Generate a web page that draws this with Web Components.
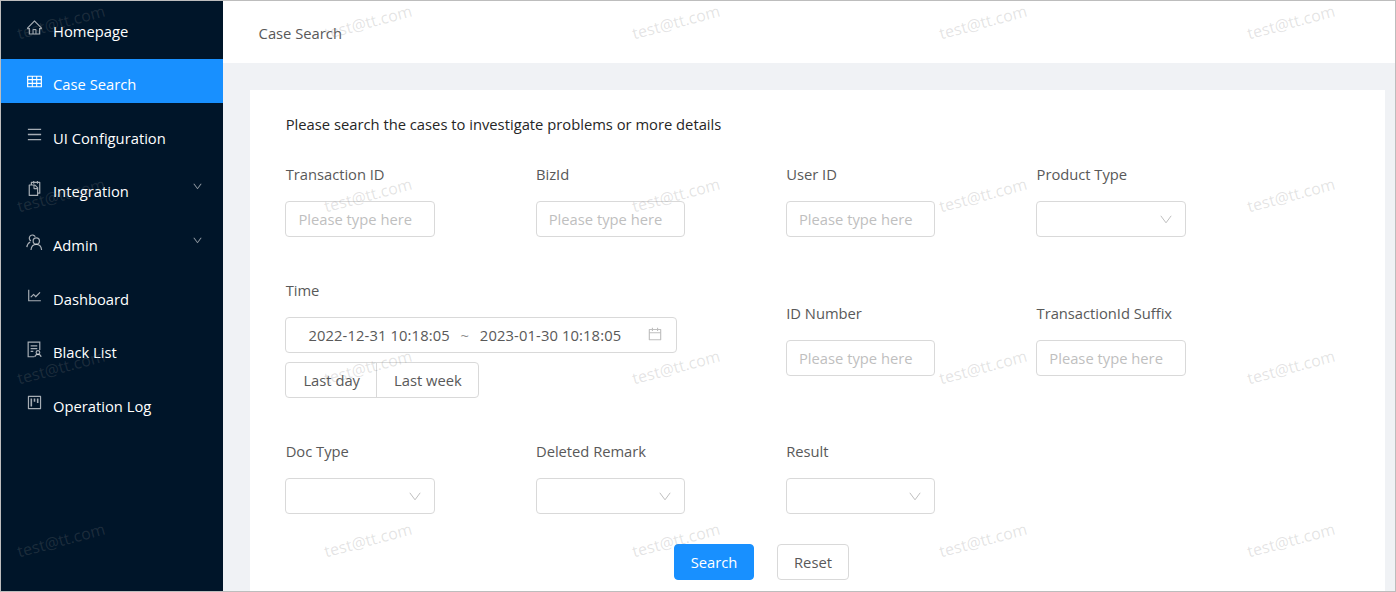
<!DOCTYPE html>
<html><head><meta charset="utf-8">
<style>
html,body{margin:0;padding:0;height:592px;overflow:hidden;background:#fff}
body{font-family:"Open Sans","Noto Sans",sans-serif}
</style></head><body>
<app-shell>
  <side-nav slot="nav">
    <nav-item icon="home">Homepage</nav-item>
    <nav-item icon="table" active>Case Search</nav-item>
    <nav-item icon="bars">UI Configuration</nav-item>
    <nav-item icon="snippets" arrow>Integration</nav-item>
    <nav-item icon="team" arrow>Admin</nav-item>
    <nav-item icon="chart">Dashboard</nav-item>
    <nav-item icon="audit">Black List</nav-item>
    <nav-item icon="project">Operation Log</nav-item>
  </side-nav>
  <top-bar slot="top">Case Search</top-bar>
  <search-card>
    <p-intro slot="intro">Please search the cases to investigate problems or more details</p-intro>
    <form-field label="Transaction ID"><text-box></text-box></form-field>
    <form-field label="BizId"><text-box></text-box></form-field>
    <form-field label="User ID"><text-box></text-box></form-field>
    <form-field label="Product Type"><select-box></select-box></form-field>
    <form-field label="Time" style="grid-column:span 2">
      <date-range></date-range>
      <button-pair></button-pair>
    </form-field>
    <form-field label="ID Number"><text-box></text-box></form-field>
    <form-field label="TransactionId Suffix"><text-box></text-box></form-field>
    <form-field label="Doc Type"><select-box></select-box></form-field>
    <form-field label="Deleted Remark"><select-box></select-box></form-field>
    <form-field label="Result"><select-box></select-box></form-field>
    <ui-button slot="actions" primary>Search</ui-button>
    <ui-button slot="actions">Reset</ui-button>
  </search-card>
  <water-mark slot="overlay"></water-mark>
</app-shell>
<script>
const ICONS={
home:'<path fill="currentColor" d="M946.5 505L560.1 118.8l-25.9-25.9a31.5 31.5 0 0 0-44.4 0L77.5 505a63.9 63.9 0 0 0-18.8 46c.4 35.2 29.7 63.3 64.9 63.3h42.5V940h691.8V614.3h43.4c17.1 0 33.2-6.7 45.3-18.8a63.6 63.6 0 0 0 18.7-45.3c0-17-6.7-33.1-18.8-45.2zM568 868H456V664h112v204zm217.9-325.7V868H632V640c0-22.1-17.9-40-40-40H432c-22.1 0-40 17.9-40 40v228H238.1V542.3h-96l370-369.7 23.1 23.1L882 542.3h-96.1z"/>',
table:'<path fill="currentColor" d="M928 160H96c-17.7 0-32 14.3-32 32v640c0 17.7 14.3 32 32 32h832c17.7 0 32-14.3 32-32V192c0-17.7-14.3-32-32-32zm-40 208H676V232h212v136zm0 224H676V432h212v160zM412 432h200v160H412V432zm200-64H412V232h200v136zm-264 0H136V232h212v136zm0 64v160H136V432h212zM136 656h212v136H136V656zm276 0h200v136H412V656zm264 136V656h212v136H676z"/>',
bars:'<path fill="currentColor" d="M904 160H120c-4.4 0-8 3.6-8 8v64c0 4.4 3.6 8 8 8h784c4.4 0 8-3.6 8-8v-64c0-4.4-3.6-8-8-8zm0 624H120c-4.4 0-8 3.6-8 8v64c0 4.4 3.6 8 8 8h784c4.4 0 8-3.6 8-8v-64c0-4.4-3.6-8-8-8zm0-312H120c-4.4 0-8 3.6-8 8v64c0 4.4 3.6 8 8 8h784c4.4 0 8-3.6 8-8v-64c0-4.4-3.6-8-8-8z"/>',
snippets:'<path fill="currentColor" d="M832 112H724V72c0-4.4-3.6-8-8-8h-56c-4.4 0-8 3.6-8 8v40H500V72c0-4.4-3.6-8-8-8h-56c-4.4 0-8 3.6-8 8v40H320c-17.7 0-32 14.3-32 32v120h-96c-17.7 0-32 14.3-32 32v632c0 17.7 14.3 32 32 32h512c17.7 0 32-14.3 32-32v-96h96c17.7 0 32-14.3 32-32V144c0-17.7-14.3-32-32-32zM664 888H232V336h218v174c0 22.1 17.9 40 40 40h174v338zm0-402H514V336h.2L664 485.8v.2zm128 274h-56V456L544 264H360v-80h68v32c0 4.4 3.6 8 8 8h56c4.4 0 8-3.6 8-8v-32h152v32c0 4.4 3.6 8 8 8h56c4.4 0 8-3.6 8-8v-32h68v576z"/>',
team:'<g fill="none" stroke="currentColor" stroke-width="72"><circle cx="620" cy="420" r="190"/><path d="M300 960c20-200 150-330 320-330s300 130 320 330"/><path d="M560 170A190 190 0 1 0 300 420M250 480C130 550 60 650 50 790"/></g>',
chart:'<path fill="currentColor" d="M888 792H200V168c0-4.4-3.6-8-8-8h-56c-4.4 0-8 3.6-8 8v688c0 4.4 3.6 8 8 8h752c4.4 0 8-3.6 8-8v-56c0-4.4-3.6-8-8-8zM305.8 637.7c3.1 3.1 8.1 3.1 11.3 0l138.3-137.6L583 628.5c3.1 3.1 8.2 3.1 11.3 0l275.4-275.3c3.1-3.1 3.1-8.2 0-11.3l-39.6-39.6a8.03 8.03 0 0 0-11.3 0l-230 229.9L461.4 404a8.03 8.03 0 0 0-11.3 0L266.3 586.7a8.03 8.03 0 0 0 0 11.4l39.5 39.6z"/>',
audit:'<g fill="none" stroke="currentColor" stroke-width="72"><path d="M500 950H130V64h700v480"/><path d="M280 290h400M280 460h400M280 630h160"/><circle cx="720" cy="690" r="110"/><path d="M530 960c20-100 100-160 190-160s170 60 190 160"/></g>',
project:'<path fill="currentColor" d="M280 752h80c4.4 0 8-3.6 8-8V280c0-4.4-3.6-8-8-8h-80c-4.4 0-8 3.6-8 8v464c0 4.4 3.6 8 8 8zm192-280h80c4.4 0 8-3.6 8-8V280c0-4.4-3.6-8-8-8h-80c-4.4 0-8 3.6-8 8v184c0 4.4 3.6 8 8 8zm192 72h80c4.4 0 8-3.6 8-8V280c0-4.4-3.6-8-8-8h-80c-4.4 0-8 3.6-8 8v256c0 4.4 3.6 8 8 8zm216-432H144c-17.7 0-32 14.3-32 32v736c0 17.7 14.3 32 32 32h736c17.7 0 32-14.3 32-32V144c0-17.7-14.3-32-32-32zm-40 728H184V184h656v656z"/>'
};
const DOWN='<path fill="currentColor" d="M884 256h-75c-5.1 0-9.9 2.5-12.9 6.6L512 654.2 227.9 262.6c-3-4.1-7.8-6.6-12.9-6.6h-75c-6.5 0-10.3 7.4-6.5 12.7l352.6 486.1c12.8 17.6 39 17.6 51.7 0l352.6-486.1c3.9-5.3.1-12.7-6.4-12.7z"/>';
const CAL='<path fill="currentColor" d="M880 184H712v-64c0-4.4-3.6-8-8-8h-56c-4.4 0-8 3.6-8 8v64H384v-64c0-4.4-3.6-8-8-8h-56c-4.4 0-8 3.6-8 8v64H144c-17.7 0-32 14.3-32 32v664c0 17.7 14.3 32 32 32h736c17.7 0 32-14.3 32-32V216c0-17.7-14.3-32-32-32zm-40 656H184V460h656v380zM184 392V256h128v48c0 4.4 3.6 8 8 8h56c4.4 0 8-3.6 8-8v-48h256v48c0 4.4 3.6 8 8 8h56c4.4 0 8-3.6 8-8v-48h128v136H184z"/>';
function def(name,html){
  customElements.define(name,class extends HTMLElement{
    constructor(){super();this.attachShadow({mode:'open'});}
    connectedCallback(){this.shadowRoot.innerHTML=typeof html==='function'?html(this):html;}
  });
}
const FONT='"Open Sans","Noto Sans",sans-serif';
const FS='14.75px';
def('app-shell',`<style>
:host{display:block;position:relative;width:1396px;height:592px;box-sizing:border-box;border:1px solid #bdbdbd;overflow:hidden;background:#f0f2f5;font-family:${FONT}}
.w{display:flex;height:100%}
.m{flex:1;min-width:0;display:flex;flex-direction:column}
.c{flex:1;min-height:0;padding:27px 10px 0 27px}
</style><div class="w"><slot name="nav"></slot><div class="m"><slot name="top"></slot><div class="c"><slot></slot></div></div></div><slot name="overlay"></slot>`);
def('side-nav',`<style>
:host{display:block;width:222px;flex:none;background:#001529;height:100%;box-sizing:border-box;padding-top:4px}
.l{display:flex;flex-direction:column;gap:9.57px}
</style><div class="l"><slot></slot></div>`);
def('nav-item',h=>`<style>
:host{display:flex;align-items:center;height:44px;box-sizing:border-box;padding:7.6px 0 0 25px;color:#fff;font-size:${FS};position:relative}
:host([active]){background:#1890ff}
svg.i{width:17px;height:17px;margin-right:10px;color:rgba(255,255,255,.65);flex:none;position:relative;top:-3px}
:host([active]) svg.i{color:#fff}
.t{flex:1}
svg.a{width:11px;height:11px;margin-right:20px;color:rgba(255,255,255,.55);position:relative;top:-5px}
</style><svg class="i" viewBox="0 0 1024 1024">${ICONS[h.getAttribute('icon')]}</svg><span class="t"><slot></slot></span>${h.hasAttribute('arrow')?`<svg class="a" viewBox="0 0 1024 1024">${DOWN}</svg>`:''}`);
def('top-bar',`<style>
:host{display:flex;align-items:center;height:62px;flex:none;background:#fff;padding:2px 0 0 35.6px;color:#595959;font-size:${FS};box-sizing:border-box}
</style><slot></slot>`);
def('search-card',`<style>
:host{display:block;background:#fff;height:100%;box-sizing:border-box;padding:22px 35px 0 35.4px}
.g{display:grid;grid-template-columns:repeat(4,250.3px);row-gap:42px;align-items:center;margin-top:27px}
.a{display:flex;gap:23px;margin:30px 0 0 388.6px}
</style><slot name="intro"></slot><div class="g"><slot></slot></div><div class="a"><slot name="actions"></slot></div>`);
def('p-intro',`<style>:host{display:block;font-size:${FS};line-height:24px;color:#262626;padding-left:.3px}</style><slot></slot>`);
def('form-field',h=>`<style>
:host{display:flex;flex-direction:column;align-items:flex-start}
.l{font-size:${FS};line-height:22px;color:#595959;margin-bottom:16px;padding-left:.3px;letter-spacing:-.03px}
.b{display:flex;flex-direction:column;gap:9px;align-items:flex-start}
</style><div class="l">${h.getAttribute('label')}</div><div class="b"><slot></slot></div>`);
const BOX='box-sizing:border-box;height:36px;border:1px solid #d9d9d9;border-radius:4px;background:#fff;';
def('text-box',`<style>
:host{display:block;${BOX}width:149.4px;padding:0 12px;line-height:34px;font-size:${FS};color:#bfbfbf;white-space:nowrap}
</style>Please type here`);
def('select-box',`<style>
:host{display:flex;align-items:center;justify-content:flex-end;${BOX}width:149.4px;padding-right:13px;color:#bfbfbf}
svg{width:12px;height:9px;fill:none;stroke:currentColor;stroke-width:1}
</style><svg viewBox="0 0 12 9"><path d="M.8.8 6 7.8 11.2.8"/></svg>`);
def('date-range',`<style>
:host{display:flex;align-items:center;${BOX}width:392px;padding:0 13px 0 22px;font-size:${FS};color:#595959;white-space:nowrap;letter-spacing:.12px}
.s{width:30px;text-align:center;color:#8c8c8c;letter-spacing:0}
svg{width:16px;height:16px;margin-left:auto;color:#bfbfbf;position:relative;top:-1px}
</style><span>2022-12-31 10:18:05</span><span class="s">~</span><span>2023-01-30 10:18:05</span><svg viewBox="0 0 1024 1024">${CAL}</svg>`);
def('button-pair',`<style>
:host{display:flex;${BOX}font-size:${FS};color:#595959}
span{display:flex;align-items:center;padding:0 16px 0 17px}
span+span{border-left:1px solid #d9d9d9}
</style><span>Last day</span><span>Last week</span>`);
def('ui-button',`<style>
:host{display:flex;align-items:center;justify-content:center;${BOX}width:72px;font-size:${FS};color:#595959}
:host([primary]){width:80px;background:#1890ff;border-color:#1890ff;color:#fff}
</style><slot></slot>`);
def('water-mark',()=>{
  let cells='';
  for(let i=0;i<20;i++)cells+=`<span>test@tt.com</span>`;
  return `<style>
:host{position:absolute;inset:0;pointer-events:none;overflow:hidden}
.g{position:absolute;left:-94px;top:-65px;display:grid;grid-template-columns:repeat(5,307.5px);grid-auto-rows:172.6px;justify-items:center;align-items:center}
span{transform:rotate(-15deg);font-size:16px;color:rgba(130,130,130,.22);white-space:nowrap}
</style><div class="g">${cells}</div>`;
});
</script>
</body></html>
